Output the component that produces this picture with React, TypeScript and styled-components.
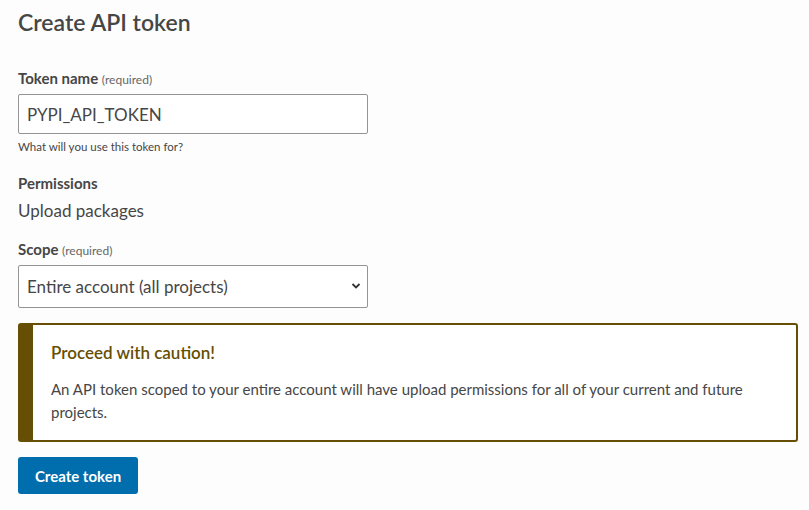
import React from "react";
import styled, { createGlobalStyle } from "styled-components";

const Global = createGlobalStyle`
  html, body { margin: 0; padding: 0; }
  body {
    background: #fdfdfd;
    font-family: Lato, "Noto Sans", sans-serif;
    color: #464646;
  }
`;

const Page = styled.div`
  padding: 8px 11px 0 18px;
  width: 809px;
  box-sizing: border-box;
`;

const Title = styled.h1`
  margin: 0;
  font-size: 23px;
  font-weight: 600;
  line-height: 28px;
  color: #464646;
`;

const Form = styled.form`
  display: flex;
  flex-direction: column;
  margin-top: 32px;
`;

const Field = styled.div<{ $mb: number }>`
  display: flex;
  flex-direction: column;
  margin-bottom: ${(p) => p.$mb}px;
`;

const Label = styled.label<{ $mb?: number }>`
  font-size: 15px;
  font-weight: 700;
  line-height: 20px;
  color: #464646;
  margin-bottom: ${(p) => (p.$mb ?? 4)}px;
`;

const Req = styled.span`
  font-size: 12px;
  font-weight: 400;
  color: #666;
`;

const Input = styled.input`
  width: 350px;
  height: 40px;
  box-sizing: border-box;
  border: 1px solid #949494;
  border-radius: 2px;
  background: #fff;
  padding: 0 8px;
  font-family: inherit;
  font-size: 17px;
  color: #464646;
  outline: none;
`;

const Help = styled.p`
  margin: 5px 0 0;
  font-size: 11.5px;
  line-height: 16px;
  color: #464646;
`;

const Value = styled.p`
  margin: 6px 0 0;
  font-size: 17px;
  line-height: 24px;
  color: #464646;
`;

const SelectWrap = styled.div`
  position: relative;
  width: 350px;
`;

const Select = styled.select`
  width: 350px;
  height: 43px;
  box-sizing: border-box;
  border: 1px solid #949494;
  border-radius: 2px;
  background: #fff;
  padding: 0 30px 0 8px;
  font-family: inherit;
  font-size: 17px;
  color: #464646;
  appearance: none;
  outline: none;
`;

const Chevron = styled.svg`
  position: absolute;
  right: 7px;
  top: 17px;
  pointer-events: none;
`;

const Callout = styled.div`
  display: flex;
  flex-direction: column;
  border: 2px solid #664e04;
  border-left-width: 15px;
  border-radius: 3px;
  background: #fff;
  padding: 16px 20px 16px 18px;
  margin-bottom: 15px;
`;

const CalloutTitle = styled.h3`
  margin: 0 0 13px;
  font-size: 17px;
  font-weight: 600;
  line-height: 24px;
  color: #664e04;
`;

const CalloutText = styled.p`
  margin: 0;
  font-size: 15px;
  line-height: 23px;
  color: #464646;
`;

const Button = styled.button`
  align-self: flex-start;
  width: 120px;
  height: 37px;
  border: none;
  border-radius: 3px;
  background: #006dad;
  color: #fff;
  font-family: inherit;
  font-size: 15px;
  font-weight: 700;
  cursor: pointer;
`;

export default function App() {
  return (
    <>
      <Global />
      <Page>
        <Title>Create API token</Title>
        <Form onSubmit={(e) => e.preventDefault()}>
          <Field $mb={18}>
            <Label>
              Token name <Req>(required)</Req>
            </Label>
            <Input defaultValue="PYPI_API_TOKEN" />
            <Help>What will you use this token for?</Help>
          </Field>
          <Field $mb={16}>
            <Label $mb={0}>Permissions</Label>
            <Value>Upload packages</Value>
          </Field>
          <Field $mb={15}>
            <Label>
              Scope <Req>(required)</Req>
            </Label>
            <SelectWrap>
              <Select defaultValue="all">
                <option value="all">Entire account (all projects)</option>
              </Select>
              <Chevron width="10" height="8" viewBox="0 0 10 8">
                <path d="M1.5 2 L5 5.5 L8.5 2" fill="none" stroke="#333" strokeWidth="1.8" />
              </Chevron>
            </SelectWrap>
          </Field>
          <Callout>
            <CalloutTitle>Proceed with caution!</CalloutTitle>
            <CalloutText>
              An API token scoped to your entire account will have upload permissions for all of your current and future
              projects.
            </CalloutText>
          </Callout>
          <Button type="submit">Create token</Button>
        </Form>
      </Page>
    </>
  );
}
